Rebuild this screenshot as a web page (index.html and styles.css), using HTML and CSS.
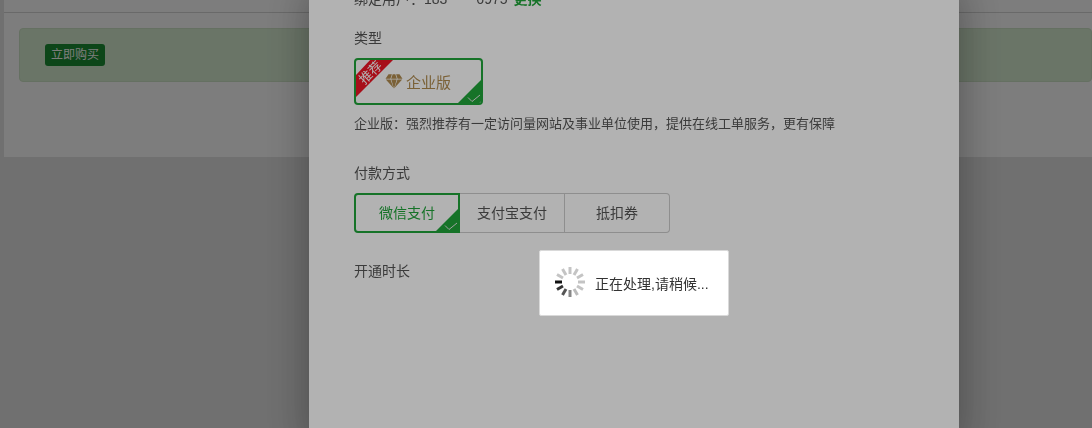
FILE: index.html
```html
<!DOCTYPE html>
<html lang="zh-CN">
<head>
<meta charset="utf-8">
<title>立即购买</title>
<link rel="stylesheet" href="styles.css">
</head>
<body>
<div class="page">
  <div class="topbar"></div>
  <div class="panel">
    <div class="alert"><span class="buy">立即购买</span></div>
  </div>
</div>
<div class="shade"></div>
<section class="modal">
  <div class="bind">绑定用户：183<span class="mask">****</span>6975 <a class="change">更换</a></div>
  <div class="label label-type">类型</div>
  <div class="card">
    <svg class="ribbon" width="129" height="47" viewBox="0 0 129 47"><polygon points="18,0 41,0 0,41 0,19" fill="#f01525"/><polygon points="102,47 129,20 129,47" fill="#20a53a"/><path d="M114 39.500l4 4 8-6.500" fill="none" stroke="#e8e8e8" stroke-width="1"/></svg>
    <span class="ribbon-text">推荐</span>
    <svg class="gem" width="18" height="15" viewBox="0 0 17 15"><path d="M3 .3h3.400L4.900 4.800H0zM7.200.3h2.600l1.600 4.500H5.600zM10.600.3H14l3 4.500h-4.900zM.3 5.600h4.700l3 8.400zM5.800 5.600h5.400L8.500 14.800zM12 5.600h4.700L9 14z" fill="#b08c50"/></svg>
    <span class="card-name">企业版</span>
  </div>
  <p class="desc">企业版：强烈推荐有一定访问量网站及事业单位使用，提供在线工单服务，更有保障</p>
  <div class="label label-pay">付款方式</div>
  <div class="pay">
    <div class="pay-item active">微信支付
      <svg class="pay-mark" width="26" height="26" viewBox="0 0 26 26"><polygon points="0,26 26,0 26,26" fill="#20a53a"/><path d="M11 18.500l4 4 8-6.500" fill="none" stroke="#e8e8e8" stroke-width="1"/></svg>
    </div>
    <div class="pay-item">支付宝支付</div>
    <div class="pay-item">抵扣券</div>
  </div>
  <div class="label label-time">开通时长</div>
</section>
<div class="shade"></div>
<div class="loading">
  <svg class="spinner" width="32" height="32" viewBox="-16 -16 32 32">
    <g fill="none" stroke-width="3">
      <path d="M-15 0h7" stroke="#111"/>
      <path d="M-13 7.500l6-3.500" stroke="#333"/>
      <path d="M-7.500 13l3.500-6" stroke="#555"/>
      <path d="M0 15V8" stroke="#888"/>
      <path d="M7.500 13L4 7" stroke="#bbb"/>
      <path d="M13 7.500L7 4" stroke="#c4c4c4"/>
      <path d="M15 0H8" stroke="#c4c4c4"/>
      <path d="M13-7.500L7-4" stroke="#c4c4c4"/>
      <path d="M7.500-13L4-7" stroke="#c4c4c4"/>
      <path d="M0-15v7" stroke="#c4c4c4"/>
      <path d="M-7.500-13l3.500 6" stroke="#c4c4c4"/>
      <path d="M-13-7.500l6 3.500" stroke="#c4c4c4"/>
    </g>
  </svg>
  <span class="loading-text">正在处理,请稍候...</span>
</div>
</body>
</html>
```

FILE: styles.css
```css
* { box-sizing: border-box; }
html, body { margin: 0; height: 100%; overflow: hidden; }
body {
  background: #e4e4e4;
  font-family: "Liberation Sans", "Noto Sans CJK SC", sans-serif;
  color: #555;
  font-size: 14px;
}
.page { padding: 0 0 0 4px; }
.topbar { height: 13px; background: #fff; border-bottom: 1px solid #d6d6d6; }
.panel { height: 144px; background: #fff; padding: 15px 15px 0; }
.alert {
  height: 54px;
  margin-right: -15px;
  padding: 15px 25px;
  background: #d9eed3;
  border: 1px solid #cfe4c8;
  border-radius: 4px;
  display: flex;
  align-items: flex-start;
}
.buy {
  width: 60px;
  height: 22px;
  background: #1b8f34;
  border-radius: 3px;
  color: #fff;
  font-size: 12px;
  line-height: 22px;
  text-align: center;
}
.shade { position: fixed; inset: 0; background: rgba(0, 0, 0, .3); }
.modal {
  position: fixed;
  left: 309px;
  top: -11px;
  width: 650px;
  height: 460px;
  padding: 0 45px;
  background: #fff;
  box-shadow: 0 0 40px rgba(0, 0, 0, .35);
}
.bind { font-size: 14px; line-height: 20px; color: #555; }
.mask { letter-spacing: 1.800px; }
.change { margin-left: 2px; color: #20a53a; font-weight: bold; }
.label { font-size: 14px; line-height: 20px; color: #555; }
.label-type { margin-top: 19px; }
.card {
  position: relative;
  width: 129px;
  height: 47px;
  margin-top: 10px;
  border: 2px solid #20a53a;
  border-radius: 4px;
  overflow: hidden;
  display: flex;
  align-items: center;
  padding-left: 29px;
  gap: 3px;
}
.ribbon { position: absolute; left: -2px; top: -2px; }
.ribbon-text {
  position: absolute;
  left: 0;
  top: 6px;
  width: 30px;
  font-size: 13px;
  line-height: 14px;
  text-align: center;
  color: #fff;
  transform: rotate(-45deg);
}
.gem { position: relative; flex: none; }
.card-name { position: relative; font-size: 15px; color: #b08c50; }
.desc { margin: 9px 0 0; font-size: 13px; line-height: 20px; color: #555; }
.label-pay { margin-top: 29px; }
.pay { display: flex; width: 316px; height: 40px; margin-top: 10px; }
.pay-item {
  position: relative;
  flex: 1 1 105px;
  border: 1px solid #ccc;
  border-left-width: 0;
  font-size: 14px;
  line-height: 38px;
  text-align: center;
  color: #555;
}
.pay-item:last-child { border-radius: 0 4px 4px 0; }
.pay-item.active {
  flex-basis: 106px;
  border: 2px solid #20a53a;
  border-radius: 4px 0 0 4px;
  line-height: 37px;
  color: #20a53a;
}
.pay-mark { position: absolute; right: -2px; bottom: -2px; }
.label-time { margin-top: 28px; }
.loading {
  position: fixed;
  left: 539px;
  top: 250px;
  width: 190px;
  height: 66px;
  background: #fff;
  border: 1px solid #d9d9d9;
  border-radius: 2px;
  display: flex;
  align-items: center;
  padding-left: 14px;
  gap: 9px;
}
.spinner { flex: none; margin-top: -2px; }
.loading-text { font-size: 14px; color: #333; }
```
